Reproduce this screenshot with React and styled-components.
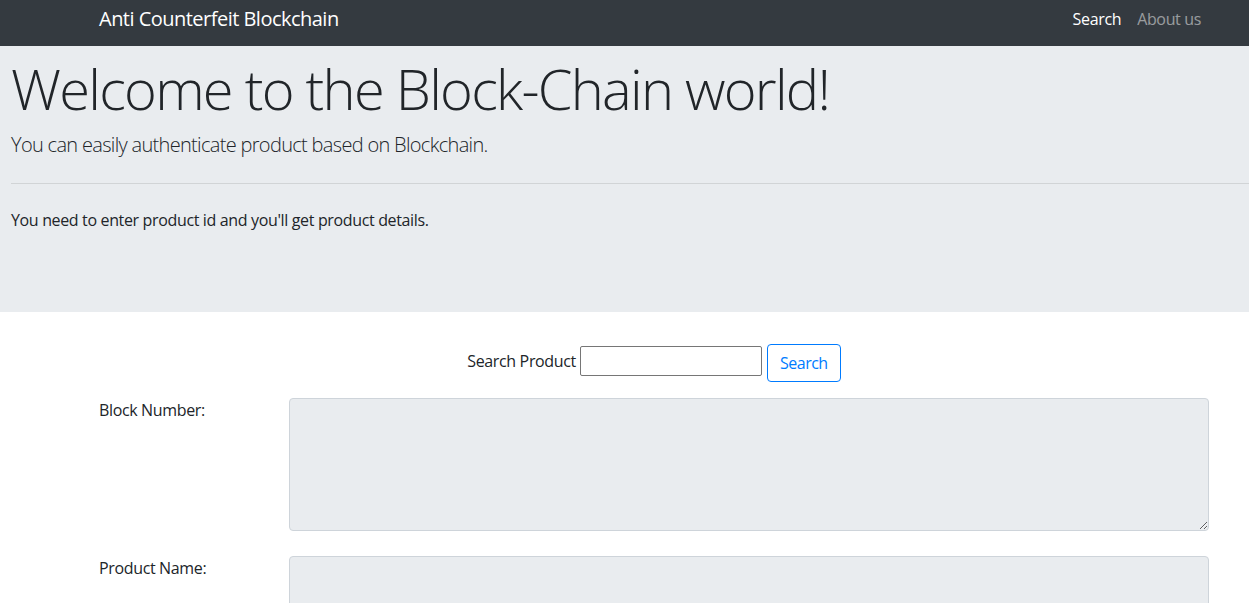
import React from 'react';
import styled, { createGlobalStyle } from 'styled-components';

const GlobalStyle = createGlobalStyle`
  * { box-sizing: border-box; }
  body {
    margin: 0;
    font-family: "Open Sans", "Noto Sans", Arial, sans-serif;
    font-size: 16px;
    line-height: 1.5;
    letter-spacing: -0.022em;
    color: #212529;
    background: #fff;
  }
`;

const Navbar = styled.nav`
  background: #343a40;
  height: 46px;
`;

const NavInner = styled.div`
  width: 1110px;
  margin-left: 99px;
  height: 100%;
  padding-bottom: 8px;
  display: flex;
  align-items: center;
  justify-content: space-between;
`;

const Brand = styled.a`
  color: #fff;
  font-size: 20px;
  line-height: 30px;
  letter-spacing: -0.026em;
  text-decoration: none;
`;

const NavLinks = styled.div`
  display: flex;
`;

const NavLink = styled.a`
  padding: 8px;
  color: ${(p) => (p.active ? '#fff' : 'rgba(255,255,255,.5)')};
  text-decoration: none;
`;

const Jumbotron = styled.div`
  background: #e9ecef;
  padding: 9px 0 64px 11px;
  margin-bottom: 32px;
`;

const Title = styled.h1`
  font-size: 56px;
  font-weight: 300;
  line-height: 1.2;
  letter-spacing: -0.031em;
  margin: 0 0 8px;
`;

const Lead = styled.p`
  font-size: 20px;
  font-weight: 300;
  letter-spacing: -0.034em;
  margin: 0;
`;

const Divider = styled.hr`
  margin: 23px 0 24px;
  border: 0;
  border-top: 1px solid rgba(0, 0, 0, 0.1);
`;

const Intro = styled.p`
  margin: 0 0 16px;
`;

const Container = styled.div`
  width: 1110px;
  margin-left: 99px;
`;

const SearchForm = styled.form`
  display: flex;
  justify-content: center;
  align-items: center;
  margin-bottom: 16px;
`;

const SearchLabel = styled.label`
  margin-right: 4px;
  margin-top: -4px;
`;

const SearchInput = styled.input`
  width: 182px;
  height: 30px;
  border: 1px solid #767676;
  border-radius: 2px;
  font: inherit;
  margin-top: -4px;
`;

const OutlineButton = styled.button`
  margin-left: 5px;
  height: 38px;
  padding: 6px 12px;
  font: inherit;
  letter-spacing: -0.03em;
  color: #007bff;
  background: transparent;
  border: 1px solid #007bff;
  border-radius: 4px;
  cursor: pointer;
`;

const FieldRow = styled.div`
  display: grid;
  grid-template-columns: 160px 1fr;
  column-gap: 30px;
  margin-bottom: 25px;
`;

const FieldLabel = styled.label``;

const FieldArea = styled.textarea`
  height: 133px;
  background: #e9ecef;
  border: 1px solid #ced4da;
  border-radius: 4px;
  font: inherit;
  padding: 6px 12px;
`;

const fields = ['Block Number:', 'Product Name:'];

export default function App() {
  return (
    <>
      <GlobalStyle />
      <Navbar>
        <NavInner>
          <Brand href="#">Anti Counterfeit Blockchain</Brand>
          <NavLinks>
            <NavLink href="#" active>Search</NavLink>
            <NavLink href="#">About us</NavLink>
          </NavLinks>
        </NavInner>
      </Navbar>
      <Jumbotron>
        <Title>Welcome to the Block-Chain world!</Title>
        <Lead>You can easily authenticate product based on Blockchain.</Lead>
        <Divider />
        <Intro>You need to enter product id and you'll get product details.</Intro>
      </Jumbotron>
      <Container>
        <SearchForm onSubmit={(e) => e.preventDefault()}>
          <SearchLabel>Search Product</SearchLabel>
          <SearchInput type="text" />
          <OutlineButton type="submit">Search</OutlineButton>
        </SearchForm>
        {fields.map((f) => (
          <FieldRow key={f}>
            <FieldLabel>{f}</FieldLabel>
            <FieldArea readOnly />
          </FieldRow>
        ))}
      </Container>
    </>
  );
}
